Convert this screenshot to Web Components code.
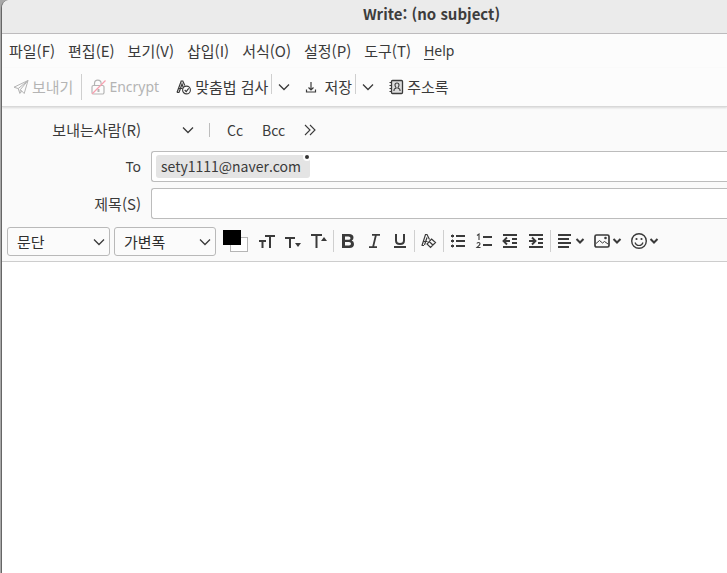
<!DOCTYPE html>
<html lang="ko">
<head>
<meta charset="utf-8">
<title>Write: (no subject)</title>
<style>
html, body { height: 100%; margin: 0; }
body { background: #fff; }
</style>
</head>
<body>
<compose-window></compose-window>
<script>
const ICONS = {
  send: [16, 16, '<path d="M1 8.2 15 1.5 11.2 14.5 7.4 10.6 15 1.5 5.2 9.6ZM7.4 10.6 6.8 14.3 9 12.2M5.2 9.6 6.8 14.3" fill="none" stroke="currentColor" stroke-linejoin="round"/>'],
  lock: [16, 16, '<path d="M4.500 6.500V4.500a3.300 3.300 0 0 1 6.600 0V5.500M3.500 6.500h9a1.500 1.500 0 0 1 1.500 1.500v5.500a1.500 1.500 0 0 1-1.500 1.500h-9a1.500 1.500 0 0 1-1.500-1.500V8a1.500 1.500 0 0 1 1.500-1.500Z" fill="none" stroke="currentColor" stroke-width="1.200"/><path d="M8.500 10v3" stroke="currentColor" stroke-width="2"/><path d="M2 15 15.500 1.500" stroke="#f8a0b0" stroke-width="1.200"/>'],
  spell: [16, 16, '<path d="M1 13.500 5.200 2h1.600l2 4.500M3 9.500h3.500M3 13.500l3-8.500 1.500 4M1 13.500h2" fill="none" stroke="currentColor" stroke-width="1.200"/><circle cx="10.500" cy="11" r="3.900" fill="none" stroke="currentColor" stroke-width="1.100"/><path d="m8.700 11 1.500 1.600 2.500-3.200" fill="none" stroke="currentColor" stroke-width="1.200"/>'],
  save: [12, 16, '<path d="M6 3v8M3.500 8.500 6 11l2.500-2.500M1.500 10.500v2.500h9v-2.500" fill="none" stroke="currentColor" stroke-width="1.200"/>'],
  book: [16, 16, '<path d="M4.500 1.500h9q1 0 1 1v11q0 1-1 1h-9q-1 0-1-1v-11q0-1 1-1Z" fill="#ddd" stroke="currentColor" stroke-width="1.300"/><path d="M1.500 3.500h2.500M1.500 6.500h2.500M1.500 9.500h2.500M1.500 12.500h2.500" stroke="currentColor"/><path d="M6 12v-1q0-1.500 2-1.800V8.500Q7 7.500 7 6q0-2 2-2t2 2q0 1.500-1 2.500v.7q2 .3 2 1.800v1" fill="none" stroke="currentColor" stroke-width="1.100"/>'],
  chev: [12, 8, '<path d="m1 1.500 5 5 5-5" fill="none" stroke="currentColor" stroke-width="1.300"/>'],
  more: [12, 12, '<path d="m1 1 5 5-5 5M6 1l5 5-5 5" fill="none" stroke="currentColor" stroke-width="1.100"/>'],
  smaller: [18, 18, '<path d="M7 3h10v2h-4v11h-2V5H7ZM1 8h7v2H5.500v6h-2v-6H1Z" fill="currentColor"/>'],
  down: [18, 18, '<path d="M1 5h10v2H7v9H5V7H1ZM11 11h6l-3 4Z" fill="currentColor"/>'],
  up: [18, 18, '<path d="M1 2h11v2H7.500v12h-2V4H1ZM11 9h6l-3-4Z" fill="currentColor"/>'],
  bold: [18, 18, '<path d="M3 2h7q4.500 0 4.500 3.700 0 2-1.800 2.800 2.300.8 2.300 3.500Q15 16 10.500 16H3ZM6 4.500v3.300h3.500q2 0 2-1.650t-2-1.650ZM6 10v3.500h4q2 0 2-1.750t-2-1.750Z" fill="currentColor" fill-rule="evenodd"/>'],
  italic: [18, 18, '<path d="M7 2.800h8M4 15.200h8M11 2.800l-3 12.400" stroke="currentColor" stroke-width="1.800" fill="none"/>'],
  underline: [18, 18, '<path d="M5 2v6.500Q5 12 9 12t4-3.500V2" stroke="currentColor" stroke-width="2" fill="none"/><path d="M3 14h12v2H3Z" fill="currentColor"/>'],
  erase: [18, 18, '<path d="m2 13.500 3.500-11h1.500l2.500 5M3.500 9.500h4M4.500 13 7 5.500M1.500 13.500h2.500" fill="none" stroke="currentColor" stroke-width="1.200"/><path d="m11.500 7 4 3.500-5 5-3.500-3.500ZM9.200 9.500l3.700 3.500" fill="none" stroke="currentColor" stroke-width="1.200"/>'],
  bullets: [18, 18, '<path d="M7 3h9v2H7ZM7 8h9v2H7ZM7 13h9v2H7Z" fill="currentColor"/><path d="M2 3h3v2H2ZM2 8h3v2H2ZM2 13h3v2H2ZM3 2.500h1v3H3ZM3 7.500h1v3H3ZM3 12.500h1v3H3Z" fill="currentColor"/>'],
  numbers: [18, 18, '<path d="M8 4h9v2H8ZM8 12h9v2H8Z" fill="currentColor"/><path d="m2 3.500 2-1.500v6M2 11.500Q2 10.500 3.500 10.500t1.500 1.200Q5 12.700 2 15.500h3.500" fill="none" stroke="currentColor" stroke-width="1.100"/>'],
  outdent: [18, 18, '<path d="M2 2h14v2H2ZM11 6h5v2h-5ZM11 10h5v2h-5ZM2 14h14v2H2Z" fill="currentColor"/><path d="M9 9H3M6 5.500 2.500 9 6 12.500" fill="none" stroke="currentColor" stroke-width="1.900"/>'],
  indent: [18, 18, '<path d="M2 2h14v2H2ZM11 6h5v2h-5ZM11 10h5v2h-5ZM2 14h14v2H2Z" fill="currentColor"/><path d="M2 9h6M5 5.500 8.500 9 5 12.500" fill="none" stroke="currentColor" stroke-width="1.900"/>'],
  align: [18, 18, '<path d="M2 2h13v2H2ZM2 6h11v2H2ZM2 10h13v2H2ZM2 14h11v2H2Z" fill="currentColor"/>'],
  image: [18, 18, '<rect x="2" y="3" width="14" height="12" rx="1.500" fill="none" stroke="currentColor" stroke-width="1.700"/><path d="m3 11.500 3.500-3 3 2.500 2-1.500 3.500 2.500" fill="none" stroke="currentColor"/><circle cx="12.500" cy="6" r="1.300" fill="currentColor"/>'],
  smile: [18, 18, '<circle cx="9" cy="9" r="7.300" fill="none" stroke="currentColor" stroke-width="1.400"/><circle cx="6.500" cy="7" r="1.100" fill="currentColor"/><circle cx="11.500" cy="7" r="1.100" fill="currentColor"/><path d="M5 10.500q1 3 4 3t4-3" fill="none" stroke="currentColor" stroke-width="1.200"/>'],
  caret: [10, 6, '<path d="m1.500 1 3.500 3.500L8.500 1" fill="none" stroke="currentColor" stroke-width="2"/>']
};

class Base extends HTMLElement {
  connectedCallback() {
    if (this.shadowRoot) return;
    this.attachShadow({ mode: 'open', delegatesFocus: true }).innerHTML =
      `<style>*{box-sizing:border-box}button,select,input{font:inherit;color:inherit;margin:0;padding:0;border:0;background:none}${this.css()}</style>${this.html()}`;
  }
  css() { return ''; }
  html() { return '<slot></slot>'; }
  attr(name) { return this.getAttribute(name) || ''; }
}
const define = (name, css, html) => customElements.define(name, class extends Base {
  css() { return css; }
  html() { return html ? html(this) : '<slot></slot>'; }
});

define('ui-icon', ':host{display:block;flex:none}svg{display:block}', el => {
  const [w, h, body] = ICONS[el.attr('name')];
  return `<svg width="${w}" height="${h}" viewBox="0 0 ${w} ${h}" aria-hidden="true">${body}</svg>`;
});

define('ui-rule', ':host{display:block;flex:none;width:1px;height:var(--rule-height,20px);background:#cfcfcf}');

define('title-bar', `
  :host{display:flex;justify-content:center;align-items:center;height:34px;padding-left:134px;background:#ebebeb;border-bottom:1px solid #bdbbbd;border-top-left-radius:8px}
  h1{margin:0;padding-bottom:6px;font:bold 15px/20px "Noto Sans CJK KR",sans-serif;color:#3d3d3d}`,
  () => '<h1><slot></slot></h1>');

define('menu-item', `
  :host{display:block;flex:none}
  button{display:block;line-height:22px;white-space:nowrap}
  ::slotted(u){text-underline-offset:3px}`,
  () => '<button type="button"><slot></slot></button>');

define('menu-bar', ':host{display:flex;align-items:center;gap:13px;height:34px;padding-left:7px}');

define('tool-button', `
  :host{display:block;flex:none}
  button{display:flex;align-items:center;gap:3px;line-height:22px;white-space:nowrap}
  :host([menu]) button{gap:1px}
  button:disabled{color:#b4b4b4}`,
  el => `<button type="button" aria-label="${el.attr('label')}" ${el.hasAttribute('disabled') ? 'disabled' : ''}>${el.attr('icon') ? `<ui-icon name="${el.attr('icon')}"></ui-icon>` : ''}<slot></slot>${el.hasAttribute('menu') ? '<ui-icon name="caret"></ui-icon>' : ''}</button>`);

define('main-toolbar', `
  :host{display:flex;align-items:center;height:39px;padding-left:11px;gap:8px;border-bottom:1px solid #d8d8d8;box-shadow:0 1px 2px #0002}
  .split{display:flex;align-items:center}
  .split ui-rule{margin:0 6px 6px 3px}
  .spell{margin-left:9px}
  .save{margin-left:7px}
  .book{margin-left:6px}
  .latin{font:14px/22px "Noto Sans",sans-serif}`,
  () => `
  <tool-button icon="send" label="보내기" disabled>보내기</tool-button>
  <ui-rule style="--rule-height:26px"></ui-rule>
  <tool-button class="latin" icon="lock" label="Encrypt" disabled>Encrypt</tool-button>
  <div class="split spell"><tool-button icon="spell" label="맞춤법 검사">맞춤법 검사</tool-button><ui-rule></ui-rule><tool-button icon="chev" label="맞춤법 검사 옵션"></tool-button></div>
  <div class="split save"><tool-button icon="save" label="저장">&nbsp;저장</tool-button><ui-rule></ui-rule><tool-button icon="chev" label="저장 옵션"></tool-button></div>
  <tool-button class="book" icon="book" label="주소록">주소록</tool-button>`);

define('drop-down', `
  :host{display:grid;align-items:center}
  select,ui-icon{grid-area:1/1}
  select{width:100%;height:29px;padding:0 24px 0 9px;appearance:none;background:#fbfbfb;border:1px solid #b9b9b9;border-radius:3px;color:#2e2e2e}
  :host([plain]) select{border-color:transparent;background:none}
  ui-icon{justify-self:end;margin-right:5px;pointer-events:none}`,
  el => `<select aria-label="${el.attr('label')}"><option>${el.attr('value')}</option></select><ui-icon name="chev"></ui-icon>`);

define('address-pill', `
  :host{display:block;flex:none;position:relative;padding:0 9px 0 5px;background:#e4e4e4;border-radius:3px;font-size:14px;line-height:23px}
  i{position:absolute;top:-2px;right:-1px;width:8px;height:8px;border-radius:50%;background:#333;border:2px solid #fff}`,
  () => '<slot></slot><i></i>');

define('address-panel', `
  :host{display:grid;grid-template-columns:139px 1fr;column-gap:10px;row-gap:6px;align-items:center;padding-top:8px}
  label{justify-self:end;line-height:22px}
  .latin{font:14px/22px "Noto Sans",sans-serif}
  .from{display:flex;align-items:center;height:30px}
  .from drop-down{width:48px}
  .from ui-rule{margin:0 17px 0 10px;background:#bdbdbd;--rule-height:14px}
  .copies{display:flex;align-items:center;gap:19px;font-size:14px}
  .field{display:flex;align-items:center;height:31px;padding-left:4px;background:#fff;border:1px solid #bcbcbc;border-right:0;border-radius:3px 0 0 3px}
  input{flex:1;min-width:0;outline:0;height:27px}`,
  () => `
  <label for="from">보내는사람(R)</label>
  <div class="from"><drop-down id="from" plain label="보내는사람" value=""></drop-down><ui-rule></ui-rule>
    <div class="copies"><tool-button label="Cc">Cc</tool-button><tool-button label="Bcc">Bcc</tool-button><tool-button icon="more" label="더 보기"></tool-button></div></div>
  <label class="latin" for="to">To</label>
  <div class="field"><address-pill>sety1111@naver.com</address-pill><input id="to" type="text"></div>
  <label for="subject">제목(S)</label>
  <div class="field"><input id="subject" type="text"></div>`);

define('color-wells', `
  :host{display:block;flex:none}
  button{display:grid;grid-template:repeat(22,1px)/repeat(25,1px)}
  .back{grid-area:8/8/23/26;border:1px solid #b5b5b5;background:#fff}
  .front{grid-area:1/1/16/19;background:#000}`,
  () => '<button type="button" aria-label="글자색과 배경색"><span class="back"></span><span class="front"></span></button>');

define('format-bar', `
  :host{display:flex;align-items:center;height:43px;padding:3px 0 0 5px;border-bottom:1px solid #cdcdcd}
  drop-down{flex:none;width:103px;margin-right:4px}
  drop-down + drop-down{width:102px;margin-right:7px}
  .tools{display:flex;align-items:center;padding-bottom:2px}
  .group{display:flex;gap:8px;padding:0 5px}
  .sizes{padding-left:10px}
  ui-rule{--rule-height:22px}`,
  () => `
  <drop-down label="문단 형식" value="문단"></drop-down><drop-down label="글꼴" value="가변폭"></drop-down>
  <div class="tools">
  <color-wells></color-wells>
  <div class="group sizes"><tool-button icon="smaller" label="글자 크기"></tool-button><tool-button icon="down" label="작게"></tool-button><tool-button icon="up" label="크게"></tool-button></div>
  <ui-rule></ui-rule>
  <div class="group"><tool-button icon="bold" label="굵게"></tool-button><tool-button icon="italic" label="기울임"></tool-button><tool-button icon="underline" label="밑줄"></tool-button></div>
  <ui-rule></ui-rule>
  <div class="group"><tool-button icon="erase" label="서식 지우기"></tool-button></div>
  <ui-rule></ui-rule>
  <div class="group"><tool-button icon="bullets" label="글머리 기호"></tool-button><tool-button icon="numbers" label="번호 목록"></tool-button><tool-button icon="outdent" label="내어쓰기"></tool-button><tool-button icon="indent" label="들여쓰기"></tool-button></div>
  <ui-rule></ui-rule>
  <div class="group"><tool-button icon="align" label="정렬" menu></tool-button><tool-button icon="image" label="삽입" menu></tool-button><tool-button icon="smile" label="이모티콘" menu></tool-button></div>
  </div>`);

define('message-editor', `
  :host{display:flex;flex:1;background:#fff}
  textarea{flex:1;border:0;outline:0;resize:none;padding:8px;font:inherit;background:none}`,
  () => '<textarea aria-label="본문"></textarea>');

define('compose-window', `
  :host{display:flex;min-height:100vh;background:#a8a8a8;border-left:1px solid #a8a8a8;box-sizing:border-box;font:15px/22px "Noto Sans CJK KR",sans-serif;color:#3a3a3a}
  main{flex:1;min-width:0;display:flex;flex-direction:column;overflow:hidden;background:#fafafa;border-left:1px solid #666;border-top-left-radius:8px}
  menu-bar,main-toolbar{background:#fcfcfc}
  .help{font:14px/22px "Noto Sans",sans-serif}`,
  () => `<main>
  <title-bar>Write: (no subject)</title-bar>
  <menu-bar><menu-item>파일(F)</menu-item><menu-item>편집(E)</menu-item><menu-item>보기(V)</menu-item><menu-item>삽입(I)</menu-item><menu-item>서식(O)</menu-item><menu-item>설정(P)</menu-item><menu-item>도구(T)</menu-item><menu-item class="help"><u>H</u>elp</menu-item></menu-bar>
  <main-toolbar></main-toolbar>
  <address-panel></address-panel>
  <format-bar></format-bar>
  <message-editor></message-editor>
  </main>`);
</script>
</body>
</html>
